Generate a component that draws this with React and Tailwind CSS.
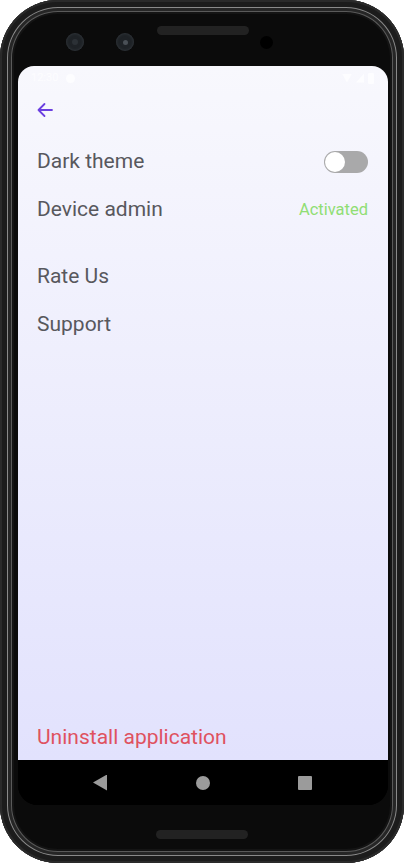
import React from "react";

export default function App() {
  return (
    <div className="w-[404px] h-[863px] bg-white" style={{ fontFamily: "Roboto, 'Noto Sans', sans-serif" }}>
      <div className="w-[404px] h-[863px] rounded-[58px] bg-[#0b0b0b] flex flex-col px-[17px] shadow-[inset_0_0_0_2px_#2a2a2a,inset_0_0_0_7px_#1c1c1c,inset_0_0_0_8px_#8a8a8a,inset_0_0_0_11px_#262626,inset_0_0_0_12px_#5a5a5a,inset_0_0_0_14px_#141414]">
        {/* top bezel */}
        <div className="h-[66px] relative shrink-0">
          <div className="absolute left-[49px] top-[33px] w-[18px] h-[18px] rounded-full bg-[#1e2226] shadow-[inset_0_0_3px_#3a3f44] flex items-center justify-center">
            <div className="w-[6px] h-[6px] rounded-full bg-[#2c3136]" />
          </div>
          <div className="absolute left-[99px] top-[33px] w-[18px] h-[18px] rounded-full bg-[#1e2226] shadow-[inset_0_0_3px_#3a3f44] flex items-center justify-center">
            <div className="w-[5px] h-[5px] rounded-full bg-[#4a5056]" />
          </div>
          <div className="absolute left-[140px] top-[26px] w-[92px] h-[9px] rounded-full bg-[#222]" />
          <div className="absolute left-[243px] top-[36px] w-[13px] h-[13px] rounded-full bg-[#000]" />
        </div>
        {/* screen */}
        <div className="mx-[1px] w-[370px] h-[739px] rounded-t-[16px] rounded-b-[20px] overflow-hidden flex flex-col shrink-0 bg-black">
          <div className="flex-1 flex flex-col bg-gradient-to-b from-[#f8f8fd] to-[#e2e2fd] px-[19px] pr-[20px]">
            <div className="h-[24px] flex items-center justify-between -mx-[6px] opacity-70">
              <div className="flex items-center gap-2">
                <span className="text-[11px] text-white">12:30</span>
                <div className="w-[9px] h-[9px] rounded-full bg-white" />
              </div>
              <div className="flex items-center gap-1">
                <div className="w-[10px] h-[9px] bg-white [clip-path:polygon(0_0,100%_0,50%_100%)]" />
                <div className="w-[8px] h-[9px] bg-white [clip-path:polygon(100%_0,100%_100%,0_100%)]" />
                <div className="w-[6px] h-[11px] bg-white rounded-[1px]" />
              </div>
            </div>
            <div className="h-[40px] flex items-center">
              <svg width="16" height="16" viewBox="0 0 16 16" fill="none" stroke="#6b3fe0" strokeWidth="1.8" strokeLinecap="round" strokeLinejoin="round">
                <path d="M15 8H1.5M7.5 2L1.5 8l6 6" />
              </svg>
            </div>
            <div className="h-[48px] mt-[8px] flex items-center justify-between">
              <span className="text-[21px] text-[#58585d]">Dark theme</span>
              <div className="w-[44px] h-[22px] rounded-full bg-[#a9a9aa] relative">
                <div className="absolute left-[1px] top-[1px] w-[20px] h-[20px] rounded-full bg-white" />
              </div>
            </div>
            <div className="h-[48px] flex items-center justify-between">
              <span className="text-[21px] text-[#58585d]">Device admin</span>
              <span className="text-[16.5px] text-[#90de74]">Activated</span>
            </div>
            <div className="h-[19px]" />
            <div className="h-[48px] flex items-center">
              <span className="text-[21px] text-[#58585d]">Rate Us</span>
            </div>
            <div className="h-[47px] flex items-center">
              <span className="text-[21px] text-[#58585d]">Support</span>
            </div>
            <div className="flex-1" />
            <div className="h-[44px] flex items-center">
              <span className="text-[21px] text-[#df5260]">Uninstall application</span>
            </div>
          </div>
          <div className="h-[45px] shrink-0 bg-black flex items-center justify-between pl-[75px] pr-[76px]">
            <div className="w-[14px] h-[16px] bg-[#9b9b9b] [clip-path:polygon(100%_0,100%_100%,0_50%)]" />
            <div className="w-[14px] h-[14px] rounded-full bg-[#9b9b9b]" />
            <div className="w-[14px] h-[14px] rounded-[1px] bg-[#9b9b9b]" />
          </div>
        </div>
        {/* bottom bezel */}
        <div className="flex-1 flex items-start justify-center pt-[25px]">
          <div className="w-[92px] h-[9px] rounded-full bg-[#222]" />
        </div>
      </div>
    </div>
  );
}
